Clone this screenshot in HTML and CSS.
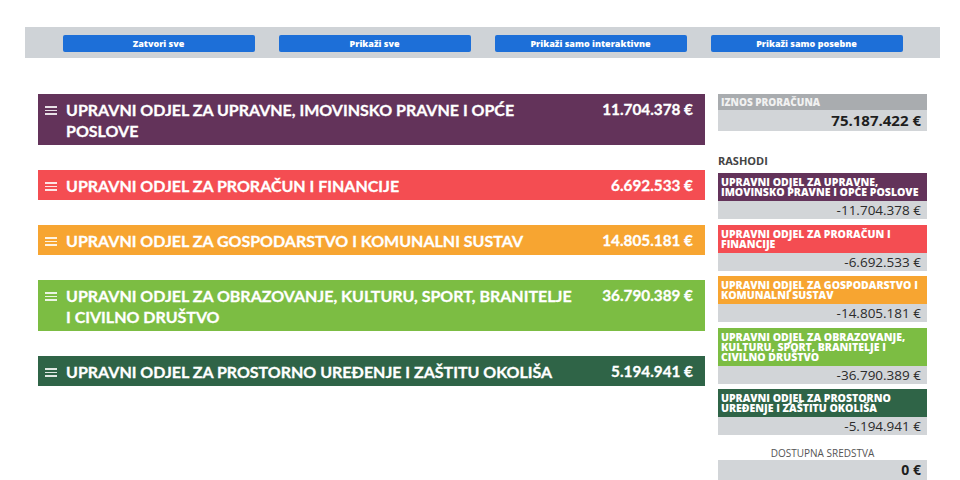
FILE: index.html
```html
<!DOCTYPE html>
<html lang="hr">
<head>
<meta charset="utf-8">
<title>Proračun</title>
<link rel="stylesheet" href="styles.css">
</head>
<body>
<div class="toolbar">
  <button class="btn">Zatvori sve</button>
  <button class="btn">Prikaži sve</button>
  <button class="btn">Prikaži samo interaktivne</button>
  <button class="btn">Prikaži samo posebne</button>
</div>
<div class="main">
  <div class="list">
    <div class="row c-purple"><span class="ham"><i></i><i></i><i></i></span><span class="title">Upravni odjel za upravne, imovinsko pravne i opće poslove</span><span class="amount">11.704.378 €</span></div>
    <div class="row c-red"><span class="ham"><i></i><i></i><i></i></span><span class="title">Upravni odjel za proračun i financije</span><span class="amount">6.692.533 €</span></div>
    <div class="row c-orange"><span class="ham"><i></i><i></i><i></i></span><span class="title">Upravni odjel za gospodarstvo i komunalni sustav</span><span class="amount">14.805.181 €</span></div>
    <div class="row c-green"><span class="ham"><i></i><i></i><i></i></span><span class="title">Upravni odjel za obrazovanje, kulturu, sport, branitelje i civilno društvo</span><span class="amount">36.790.389 €</span></div>
    <div class="row c-dkgreen"><span class="ham"><i></i><i></i><i></i></span><span class="title">Upravni odjel za prostorno uređenje i zaštitu okoliša</span><span class="amount">5.194.941 €</span></div>
  </div>
  <aside class="side">
    <div class="total">
      <div class="total-head">Iznos proračuna</div>
      <div class="total-val">75.187.422 €</div>
    </div>
    <div class="side-label">Rashodi</div>
    <div class="items">
      <div class="item"><div class="item-head c-purple">Upravni odjel za upravne, imovinsko pravne i opće poslove</div><div class="item-val">-11.704.378 €</div></div>
      <div class="item"><div class="item-head c-red">Upravni odjel za proračun i financije</div><div class="item-val">-6.692.533 €</div></div>
      <div class="item"><div class="item-head c-orange">Upravni odjel za gospodarstvo i komunalni sustav</div><div class="item-val">-14.805.181 €</div></div>
      <div class="item"><div class="item-head c-green">Upravni odjel za obrazovanje, kulturu, sport, branitelje i civilno društvo</div><div class="item-val">-36.790.389 €</div></div>
      <div class="item"><div class="item-head c-dkgreen">Upravni odjel za prostorno uređenje i zaštitu okoliša</div><div class="item-val">-5.194.941 €</div></div>
    </div>
    <div class="avail-label">Dostupna sredstva</div>
    <div class="avail-val">0 €</div>
  </aside>
</div>
</body>
</html>
```
FILE: styles.css
```css
html, body {
  margin: 0;
  padding: 0;
  background: #fff;
  font-family: "Open Sans", "Liberation Sans", sans-serif;
}
.toolbar {
  margin: 27px 20px 0 25px;
  height: 31px;
  background: #cfd3d7;
  display: flex;
  justify-content: center;
  align-items: center;
  gap: 24px;
}
.btn {
  width: 192px;
  height: 17px;
  border: 0;
  border-radius: 2px;
  background: #1d6fd8;
  color: #fff;
  font-family: "Open Sans", "Liberation Sans", sans-serif;
  font-weight: 800;
  font-size: 9px;
  padding: 0;
  margin-top: 1px;
}
.main {
  display: flex;
  align-items: flex-start;
  margin: 36px 0 0 38px;
  gap: 13px;
}
.list {
  width: 667px;
  display: flex;
  flex-direction: column;
  gap: 25px;
}
.row {
  display: flex;
  align-items: flex-start;
  padding: 5px 12px 4px 7px;
  color: #fff;
  font-family: Lato, "Open Sans", sans-serif;
  font-weight: 700;
  font-size: 16px;
  line-height: 21px;
  text-transform: uppercase;
  -webkit-text-stroke: 0.3px #fff;
}
.ham {
  width: 12px;
  flex-shrink: 0;
  display: flex;
  flex-direction: column;
  gap: 2px;
  margin-top: 7px;
  margin-right: 9px;
}
.ham i {
  display: block;
  height: 1.5px;
  background: rgba(255,255,255,0.85);
}
.title {
  flex: 1;
  padding-right: 16px;
}
.amount {
  flex-shrink: 0;
  width: 100px;
  text-align: right;
  text-transform: none;
  font-size: 15.3px;
}
.c-purple { background: #63335a; }
.c-red { background: #f44d52; }
.c-orange { background: #f7a531; }
.c-green { background: #7cbd43; }
.c-dkgreen { background: #2f6447; }

.side {
  width: 209px;
  display: flex;
  flex-direction: column;
}
.total-head {
  background: #a9acaf;
  color: #f1f1f1;
  font-size: 10px;
  font-weight: 800;
  text-transform: uppercase;
  height: 16px;
  line-height: 16px;
  padding-left: 3px;
}
.total-val {
  background: #d2d5d8;
  height: 21px;
  line-height: 21px;
  text-align: right;
  font-size: 15px;
  font-weight: 700;
  color: #1e1e1e;
  padding-right: 6px;
}
.side-label {
  margin-top: 22px;
  font-size: 11px;
  font-weight: 700;
  color: #444;
  text-transform: uppercase;
  height: 20px;
  line-height: 16px;
}
.items {
  display: flex;
  flex-direction: column;
  gap: 5.5px;
}
.item-head {
  color: #fff;
  font-size: 10.5px;
  font-weight: 800;
  line-height: 10px;
  text-transform: uppercase;
  padding: 4px 4px 4px 3px;
  min-height: 20px;
}
.item-val {
  background: #d2d5d8;
  height: 18px;
  line-height: 18px;
  text-align: right;
  font-size: 13.5px;
  color: #2b2b2b;
  padding-right: 6px;
}
.avail-label {
  margin-top: 12px;
  text-align: center;
  font-size: 10px;
  color: #555;
  text-transform: uppercase;
  height: 13px;
  line-height: 13px;
}
.avail-val {
  background: #d2d5d8;
  height: 20px;
  line-height: 20px;
  text-align: right;
  font-size: 14px;
  font-weight: 700;
  color: #1e1e1e;
  padding-right: 6px;
}
```
